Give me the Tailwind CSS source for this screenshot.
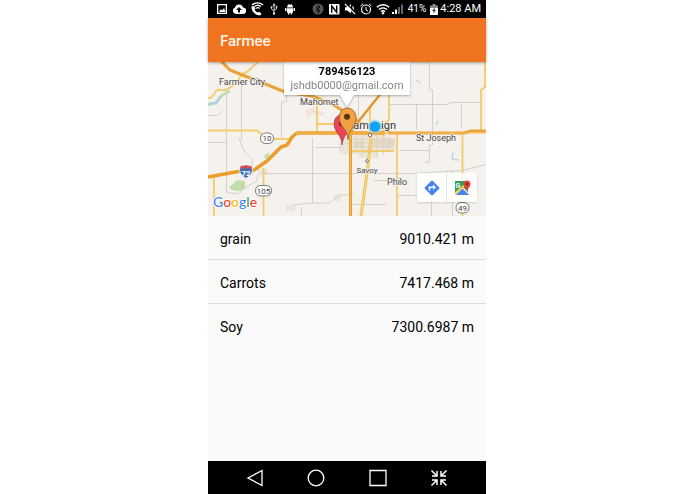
<!DOCTYPE html>
<html lang="en">
<head>
<meta charset="utf-8">
<meta name="viewport" content="width=device-width, initial-scale=1">
<title>Farmee</title>
<script src="https://cdn.jsdelivr.net/npm/@tailwindcss/browser@4"></script>
</head>
<body class="bg-white pr-px font-[Roboto,sans-serif]">
<div class="mx-auto flex min-h-screen w-full max-w-[278px] flex-col bg-[#fafafa] text-black">

  <!-- Status bar -->
  <div class="flex h-[18px] items-center justify-between bg-black pl-2 pr-[5px] text-white">
    <div class="flex items-center gap-1">
      <svg class="h-3 w-3" viewBox="0 0 12 12"><path fill="#fff" fill-rule="evenodd" d="M1 1h10v10H1zM2.300 2.300v7.400h7.400V2.300zM3 9l2-3 1.300 1.600L8 5l1.500 4z"/></svg>
      <svg class="h-3 w-3.5" viewBox="0 0 14 12"><path fill="#fff" fill-rule="evenodd" d="M4 11a3.300 3.300 0 0 1-.9-6.400A4.100 4.100 0 0 1 11 4.400A3.300 3.300 0 0 1 10.700 11zM7 4 4 7h2v2.500h2V7h2z"/></svg>
      <svg class="h-3.5 w-3.5" viewBox="0 0 14 14"><path fill="#fff" d="M1.500 4.500 4 4l1.600 2.600-1 1c.6 1.500 1.600 2.400 3 3l1.400-.8 2.500 2-1 1.500C5 13.500 1 9 1.500 4.500z"/><path fill="none" stroke="#fff" stroke-width="1.300" d="M2 3C5 .2 10 .2 13 3M4.500 4.600c2-1.700 4.500-1.700 6.500 0M6.300 6.400c1-.9 2.200-.9 3.200 0"/></svg>
      <svg class="ml-0.5 h-3 w-2" viewBox="0 0 8 12"><path fill="none" stroke="#ccc" d="M4 2v8M1.500 4.500V6L4 8m2.500-4v2L4 7"/><path fill="#ddd" d="m4 0 1.500 2.500h-3zM.7 3.300h1.600v1.600H.7zM5.700 2.800h1.600v1.600H5.700z"/><circle cx="4" cy="10.500" r="1.200" fill="#ddd"/></svg>
      <svg class="ml-0.5 h-3 w-3" viewBox="0 0 12 12"><path fill="#fff" d="M3 4.500a3 3 0 0 1 6 0zM3 5.200h6V9a1 1 0 0 1-1 1v1.500H6.700V10H5.300v1.500H4V10a1 1 0 0 1-1-1zM1 5h1.500v3H1zM9.500 5H11v3H9.500z"/><path stroke="#fff" stroke-width=".7" d="m4 1 .7 1M8 1l-.7 1"/></svg>
    </div>
    <div class="flex items-center gap-1">
      <svg class="h-3 w-3" viewBox="0 0 12 12"><circle cx="6" cy="6" r="5.500" fill="#555"/><path fill="none" stroke="#111" d="M3.800 4 8 8 6 9.800V2.200L8 4 3.800 8"/></svg>
      <svg class="h-3 w-3" viewBox="0 0 12 12"><rect x="1" y="1" width="10.500" height="10.500" rx="1" fill="#fff"/><path fill="none" stroke="#000" stroke-width="1.400" d="M3.700 9.800V3l5 6.300V2.500"/></svg>
      <svg class="h-3 w-3" viewBox="0 0 12 12"><path fill="#fff" d="M1 4.300h2.300L7 1v9.500L3.300 7.600H1z"/><path stroke="#000" stroke-width="1.500" d="m2 0 10 10"/><path fill="none" stroke="#fff" stroke-width="1.200" d="m.8.800 10.400 10.400M8.500 3.500c1 .8 1 2 .7 3"/></svg>
      <svg class="h-3 w-3" viewBox="0 0 12 12"><circle cx="6" cy="6.500" r="4.500" fill="none" stroke="#fff" stroke-width="1.200"/><path fill="none" stroke="#fff" d="M6 4v3l2 1M.5 3 3 .8M11.500 3 9 .8"/></svg>
      <svg class="h-3 w-3.5" viewBox="0 0 14 12"><path fill="none" stroke="#fff" stroke-width="1.400" d="M.8 4.300c3.500-3.500 8.900-3.500 12.400 0M3 6.600c2.300-2.200 5.700-2.200 8 0M5 8.700c1.200-1.100 2.800-1.100 4 0"/><circle cx="7" cy="10.300" r="1.200" fill="#fff"/></svg>
      <svg class="-ml-0.5 h-3 w-3" viewBox="0 0 12 12"><path fill="#fff" d="M0 9h2v2H0zM3 6.500h2V11H3z"/><path fill="#666" d="M6 4h2v7H6zM9 1.500h2V11H9z"/></svg>
      <span class="text-[10px] leading-3">41%</span>
      <span class="flex items-center gap-0.5">
        <svg class="h-3 w-2" viewBox="0 0 8 12"><path fill="#888" d="M2.500 1h3v1.500H8V6H0V2.500h2.500z"/><path fill="#fff" d="M0 5h8v7H0z"/><path fill="#444" d="M4.600 4.500 2 8h1.500v2.500L6 7H4.600z"/></svg>
        <span class="text-[11px] leading-3">4:28 AM</span>
      </span>
    </div>
  </div>

  <!-- App bar -->
  <header class="relative z-10 flex h-11 items-center bg-[#f07420] px-3 pt-px text-[#fff4e6] shadow-[0_1px_3px_rgba(0,0,0,0.35)]">
    <h1 class="text-[15px] font-medium leading-5">Farmee</h1>
  </header>

  <!-- Map -->
  <section aria-label="Map" class="relative aspect-[278/154] overflow-hidden bg-[#f5f2ed]">
    <svg class="block h-full w-full" viewBox="208 62 278 154" fill="none" stroke-linejoin="round" font-family="Roboto, sans-serif">
      <!-- Built-up areas and parks -->
      <g fill="#ece5dc">
        <path d="M343 134h26v-4h18v8h8v13h-17v7h-20v-4h-15z"/>
        <path d="M305 111l8-4 4 4 8 1-3 4-10-2-5 4z" fill="#f3e3df"/>
        <path d="M258 169h10v6h-10zM338 143h9v13l-7-2zM286 205h9v6h-9zM334 195h7v6h-7z"/>
      </g>
      <path fill="#e3d9cb" d="M372 139h23v8h-23zM354 141h10v7h-10z"/>
      <path fill="#c1dda9" d="m232 185 5-5 8 1v8l-5 2-8-1-3-3zM264 156l5-4v5l-4 2z"/>
      <path stroke="#c4dfb1" stroke-width="3" d="m208 104 8-1 5-7 9-5"/>
      <path stroke="#a9d0ee" stroke-width="2" d="m208 105 9-3 4-6"/>
      <path stroke="#bdd2ea" stroke-width="1.300" d="m453 152-1 7 7 1M416 80l5 3M438 121l-2 4"/>
      <!-- County and local roads -->
      <g stroke="#d3d0cd">
        <path d="M226.500 88v104l12 2 6-6 12-7 2-8M241.500 86v54M208 142.500h19M239 138l5 13 8 8v16M286.500 62v40h-5v35M208 115.500h10l4-5M261 173.500h137M312.500 138v65h17l9-8h15M292 205l20-2M301.500 207v9M358.500 95v30M390 104.500h57l4-2h31M416.500 105v25M409.500 62h20v28h3v55h-3v17h-5M461.500 104v24M400 150.500h30M397 173.500h16l49-3 24-6M431.500 174v42M452.500 171v45M398 195.500h19M374 180.500h23M353 204.500h33M316 147.500h26"/>
      </g>
      <g stroke="#dccdb0" stroke-width=".7"><path d="M345 139h48M345 143h48M352 147h40M356 134v18M362 130v26M377 128v29M383 128v28M389 134v18M347 152h29"/></g>
      <!-- Secondary roads -->
      <g stroke="#f3cd6d" stroke-width="1.900">
        <path d="M208 98h3l6-8h9l10-6 6-10 5-2 12-11M208 130.500h49l6 5M273 139h19M214 178v38M263.500 168v48M317 106v27M389 62v58l-6 4v13M397 133v83M485 62v25l-4 3v42M462.500 132v84M370 106v30M342 133v-9h40M316 124h20M350 151h44"/>
      </g>
      <path stroke="#ecbf55" stroke-width="3" d="m371 137-3 29-7 50"/>
      <path stroke="#fbe092" d="m371 137-3 29-7 50"/>
      <!-- Interstates -->
      <path stroke="#eaa239" stroke-width="3" d="m221 61 9 9 15 6 18 7 22 9 27 4 22 9 15 10 11 8 15 3 8 1 7 6h74l7-2h20"/>
      <path stroke="#e29729" stroke-width="2.500" d="m395 76-17 21-20 25-7 10"/>
      <path stroke="#eb9d2c" stroke-width="3.500" d="m208 177 33-6 13-1 13-9 14-14 6-2 5-8 5-4h88"/>
      <path stroke="#eb9d2c" stroke-width="3" d="M350.500 125v91"/>
      <path stroke="#f7bd4e" d="M296 133h190M350.500 133v83"/>
      <g fill="#fff" stroke="#777"><circle cx="370" cy="135" r="1.700"/><circle cx="367" cy="161" r="1.400"/></g>
      <!-- Road shields -->
      <g fill="#fff" stroke="#777"><rect x="260.500" y="133" width="13" height="10.500" rx="5"/><rect x="255.500" y="185.500" width="16" height="10.500" rx="5"/><rect x="456" y="202.500" width="13" height="10.500" rx="5"/></g>
      <path fill="#3d6fb5" stroke="#fff" stroke-width=".8" d="M240.500 166q2.500 0 5.500-1 3 1 5.500 1 3.500 7.500-5.500 12.500-9-5-5.500-12.500z"/>
      <path fill="#d84b4c" d="M240.800 166q2.500 0 5.200-.8 2.500.8 5.200.8l.6 2.500h-11.600z"/>
      <g fill="#444" font-size="8" text-anchor="middle"><text x="267" y="141">10</text><text x="263.500" y="193.500">105</text><text x="462.500" y="210.500">49</text><text x="246" y="175.500" fill="#fff" font-weight="700">72</text></g>
      <!-- Place names -->
      <g fill="#454545" stroke="#f8f5f1" stroke-width="1.500" paint-order="stroke" font-size="9">
        <text x="219" y="85">Farmer City</text><text x="300" y="105">Mahomet</text><text x="416" y="141">St Joseph</text><text x="387" y="185">Philo</text><text x="356.500" y="173" font-size="8">Savoy</text><text x="396" y="129" text-anchor="end" font-size="11" fill="#333">Champaign</text>
      </g>
      <!-- Current location -->
      <circle cx="375" cy="126.500" r="7" fill="#9cd3f2" opacity=".6"/><circle cx="375" cy="126.500" r="5.200" fill="#0fa3f5"/>
      <!-- Markers -->
      <path fill="#eb4657" stroke="#9c2e3b" stroke-width=".7" d="M342 145c-.6-8-3-9.500-6-14.500-4-7-1-16 6-16s11 9 7 15.500c-3 5-6 7-7 15z"/><circle cx="342" cy="123.500" r="2.800" fill="#5d1620"/>
      <path fill="#f2a045" stroke="#8f5e2c" stroke-width=".8" d="M348 139.500c-.6-8-3-9.500-6-13.500-5.500-8-2-18 5-18s12 8 7.500 16.500c-3 5-5.500 7-6.500 15z"/><circle cx="347" cy="116.800" r="3" fill="#54320f"/>
      <!-- Google wordmark -->
      <text x="213" y="207" font-size="14" font-weight="500" stroke="#fff" stroke-width="1.500" paint-order="stroke" font-family="Lato, sans-serif"><tspan fill="#4285f4">G</tspan><tspan fill="#ea4335">o</tspan><tspan fill="#fbbc05">o</tspan><tspan fill="#4285f4">g</tspan><tspan fill="#34a853">l</tspan><tspan fill="#ea4335">e</tspan></text>
    </svg>

    <!-- Marker callout -->
    <div class="absolute inset-x-0 top-0 flex flex-col items-center drop-shadow-[0_1px_1px_rgba(0,0,0,0.3)]">
      <div class="bg-white px-1.5 pb-0.5 pt-[3px] text-center text-[11px]">
        <p class="font-bold leading-[14px]">789456123</p>
        <p class="leading-[14px] text-[#858585]">jshdb0000@gmail.com</p>
      </div>
      <svg class="h-3 w-3.5" viewBox="0 0 14 12"><path fill="#fff" d="M0 0h14L7 12z"/></svg>
    </div>

    <!-- Map shortcuts -->
    <div class="absolute bottom-3.5 right-[9px] flex divide-x divide-[#e4e4e4] bg-white/90 shadow-[0_1px_2px_rgba(0,0,0,0.15)]">
      <button type="button" aria-label="Directions" class="flex h-[29px] w-[30px] items-center justify-center">
        <svg class="h-4 w-4" viewBox="0 0 16 16"><path fill="#4383ec" d="M7.200.900q.8-.7 1.600 0l6.300 6.300q.7.800 0 1.600l-6.300 6.300q-.8.700-1.600 0L.9 8.800q-.7-.8 0-1.600z"/><path fill="none" stroke="#fff" stroke-width="1.600" d="M5.500 10.500V7.300h4"/><path fill="#fff" d="m9 4.500 3 2.800-3 2.800z"/></svg>
      </button>
      <button type="button" aria-label="Open in Google Maps" class="flex h-[29px] w-[30px] items-center justify-center">
        <svg class="h-[17px] w-[17px]" viewBox="0 0 17 17"><path fill="#2e9e58" d="M1 2h13v14H1z"/><path fill="#e8e8e8" d="m1 15 8-7 6 6v2H1z"/><path fill="#4a86e8" d="m2 16 6.500-6.500L15 16z"/><path stroke="#f5cf48" stroke-width="1.700" d="m1 14.500 9-8"/><text x="1.500" y="8.500" font-size="7" font-weight="700" fill="#fff" font-family="Roboto, sans-serif">G</text><path fill="#db4437" d="M13 13c-.3-4-3.500-4.500-3.500-8a3.500 3.500 0 0 1 7 0c0 3.500-3.200 4-3.500 8z"/><circle cx="13" cy="5" r="1.200" fill="#7b231e"/></svg>
      </button>
    </div>
  </section>

  <!-- Product distances -->
  <main class="flex-1">
    <ul class="divide-y divide-[#dedede] text-[14px] leading-5">
      <li class="flex h-11 items-center justify-between px-3 pt-0.5"><span>grain</span><span>9010.421 m</span></li>
      <li class="flex h-11 items-center justify-between px-3 pt-0.5"><span>Carrots</span><span>7417.468 m</span></li>
      <li class="flex h-11 items-center justify-between px-3 pt-0.5"><span>Soy</span><span>7300.6987 m</span></li>
    </ul>
  </main>

  <!-- Navigation bar -->
  <nav class="flex h-[33px] items-center justify-between bg-black px-[38px]" aria-label="System">
    <button type="button" aria-label="Back"><svg class="h-[18px] w-[18px]" viewBox="0 0 18 18"><path fill="none" stroke="#fff" stroke-width="1.300" d="M16 1.500v15L2 9z"/></svg></button>
    <button type="button" aria-label="Home"><svg class="h-[18px] w-[18px]" viewBox="0 0 18 18"><circle cx="9" cy="9" r="7.800" fill="none" stroke="#fff" stroke-width="1.300"/></svg></button>
    <button type="button" aria-label="Recent apps"><svg class="h-[18px] w-[18px]" viewBox="0 0 18 18"><path fill="none" stroke="#fff" stroke-width="1.300" d="M1 1.500h16v15H1z"/></svg></button>
    <button type="button" aria-label="Shrink screen"><svg class="h-[18px] w-[18px]" viewBox="0 0 18 18"><path fill="none" stroke="#fff" stroke-width="1.500" d="m1.500 1.500 5 5M7 2v5H2M16.500 1.500l-5 5M11 2v5h5M1.500 16.500l5-5M7 16v-5H2M16.500 16.500l-5-5M11 16v-5h5"/></svg></button>
  </nav>
</div>
</body>
</html>
